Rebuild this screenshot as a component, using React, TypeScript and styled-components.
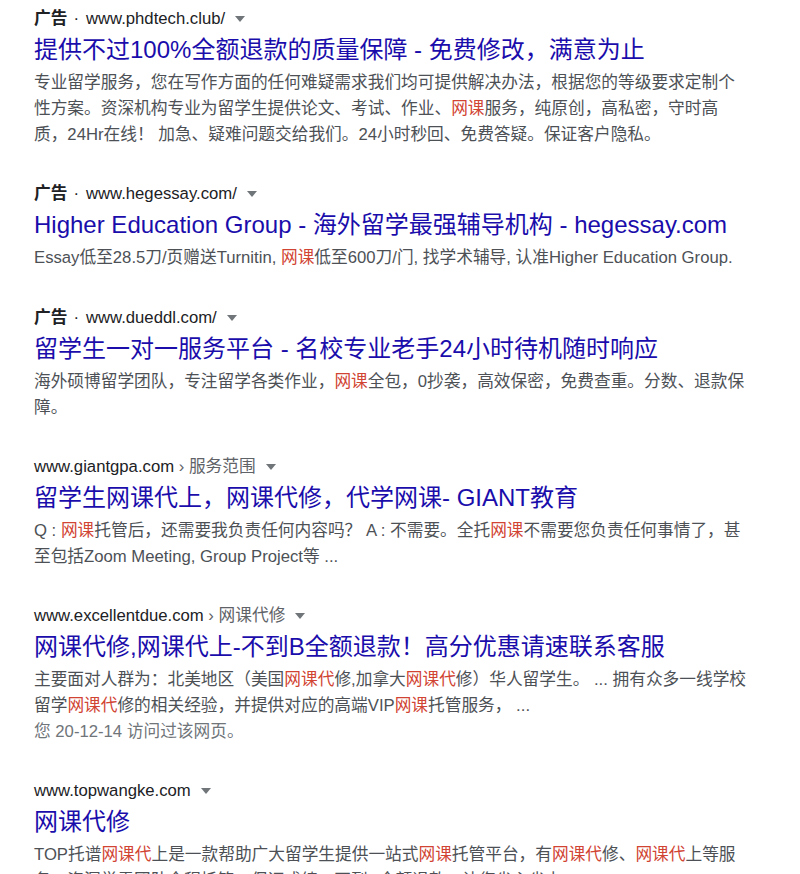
import React from "react";
import styled, { createGlobalStyle } from "styled-components";

const GlobalStyle = createGlobalStyle`
  html, body {
    margin: 0;
    padding: 0;
    background: #fff;
  }
  body {
    font-family: "Liberation Sans", Arial, "Noto Sans CJK SC", sans-serif;
    -webkit-font-smoothing: antialiased;
  }
`;

type Piece = string | { hl: string };

type ResultData = {
  ad?: boolean;
  url: string;
  crumb?: string;
  title: string;
  lines: Piece[][];
  visited?: string;
};

const results: ResultData[] = [
  {
    ad: true,
    url: "www.phdtech.club/",
    title: "提供不过100%全额退款的质量保障 - 免费修改，满意为止",
    lines: [
      ["专业留学服务，您在写作方面的任何难疑需求我们均可提供解决办法，根据您的等级要求定制个"],
      ["性方案。资深机构专业为留学生提供论文、考试、作业、", { hl: "网课" }, "服务，纯原创，高私密，守时高"],
      ["质，24Hr在线！ 加急、疑难问题交给我们。24小时秒回、免费答疑。保证客户隐私。"],
    ],
  },
  {
    ad: true,
    url: "www.hegessay.com/",
    title: "Higher Education Group - 海外留学最强辅导机构 - hegessay.com",
    lines: [
      ["Essay低至28.5刀/页赠送Turnitin, ", { hl: "网课" }, "低至600刀/门, 找学术辅导, 认准Higher Education Group."],
    ],
  },
  {
    ad: true,
    url: "www.dueddl.com/",
    title: "留学生一对一服务平台 - 名校专业老手24小时待机随时响应",
    lines: [
      ["海外硕博留学团队，专注留学各类作业，", { hl: "网课" }, "全包，0抄袭，高效保密，免费查重。分数、退款保"],
      ["障。"],
    ],
  },
  {
    url: "www.giantgpa.com",
    crumb: "服务范围",
    title: "留学生网课代上，网课代修，代学网课- GIANT教育",
    lines: [
      ["Q : ", { hl: "网课" }, "托管后，还需要我负责任何内容吗？ A : 不需要。全托", { hl: "网课" }, "不需要您负责任何事情了，甚"],
      ["至包括Zoom Meeting, Group Project等 ..."],
    ],
  },
  {
    url: "www.excellentdue.com",
    crumb: "网课代修",
    title: "网课代修,网课代上-不到B全额退款！高分优惠请速联系客服",
    lines: [
      ["主要面对人群为：北美地区（美国", { hl: "网课代" }, "修,加拿大", { hl: "网课代" }, "修）华人留学生。 ... 拥有众多一线学校"],
      ["留学", { hl: "网课代" }, "修的相关经验，并提供对应的高端VIP", { hl: "网课" }, "托管服务， ..."],
    ],
    visited: "您 20-12-14 访问过该网页。",
  },
  {
    url: "www.topwangke.com",
    title: "网课代修",
    lines: [
      ["TOP托谱", { hl: "网课代" }, "上是一款帮助广大留学生提供一站式", { hl: "网课" }, "托管平台，有", { hl: "网课代" }, "修、", { hl: "网课代" }, "上等服"],
      ["务，资深学霸团队全程托管，保证成绩，不到B全额退款，让您省心省力。"],
    ],
  },
];

const Page = styled.main`
  padding: 8px 0 0 34px;
  display: flex;
  flex-direction: column;
  gap: 35.3px;
  overflow: hidden;
  height: 866px;
`;

const Result = styled.section`
  display: flex;
  flex-direction: column;
`;

const UrlLine = styled.div`
  display: flex;
  align-items: center;
  height: 22px;
  font-size: 16.7px;
  line-height: 22px;
  color: #202124;
  white-space: nowrap;
`;

const AdLabel = styled.span`
  font-weight: 700;
  color: #202124;
`;

const Dot = styled.span`
  padding: 0 7px 0 6px;
`;

const Crumb = styled.span`
  color: #5f6368;
`;

const Caret = styled.svg`
  margin-left: 10px;
  flex: none;
`;

const Title = styled.h3`
  margin: 5px 0 0;
  font-size: 24px;
  line-height: 30px;
  font-weight: 400;
  color: #1a0dab;
  white-space: nowrap;
`;

const Snippet = styled.div`
  margin-top: 5px;
  font-size: 16.7px;
  line-height: 26px;
  color: #4d5156;
  white-space: nowrap;
`;

const Mark = styled.span`
  color: #d14433;
`;

const Visited = styled.div`
  color: #70757a;
`;

function CaretIcon() {
  return (
    <Caret width="10" height="6" viewBox="0 0 10 6">
      <path d="M0 0 L10 0 L5 6 Z" fill="#70757a" />
    </Caret>
  );
}

function SearchResult({ data }: { data: ResultData }) {
  return (
    <Result>
      <UrlLine>
        {data.ad && (
          <>
            <AdLabel>广告</AdLabel>
            <Dot>·</Dot>
          </>
        )}
        <span>{data.url}</span>
        {data.crumb && <Crumb>&nbsp;›&nbsp;{data.crumb}</Crumb>}
        <CaretIcon />
      </UrlLine>
      <Title>{data.title}</Title>
      <Snippet>
        {data.lines.map((line, i) => (
          <div key={i}>
            {line.map((p, j) =>
              typeof p === "string" ? <span key={j}>{p}</span> : <Mark key={j}>{p.hl}</Mark>
            )}
          </div>
        ))}
        {data.visited && <Visited>{data.visited}</Visited>}
      </Snippet>
    </Result>
  );
}

export default function App() {
  return (
    <>
      <GlobalStyle />
      <Page>
        {results.map((r) => (
          <SearchResult key={r.url} data={r} />
        ))}
      </Page>
    </>
  );
}
